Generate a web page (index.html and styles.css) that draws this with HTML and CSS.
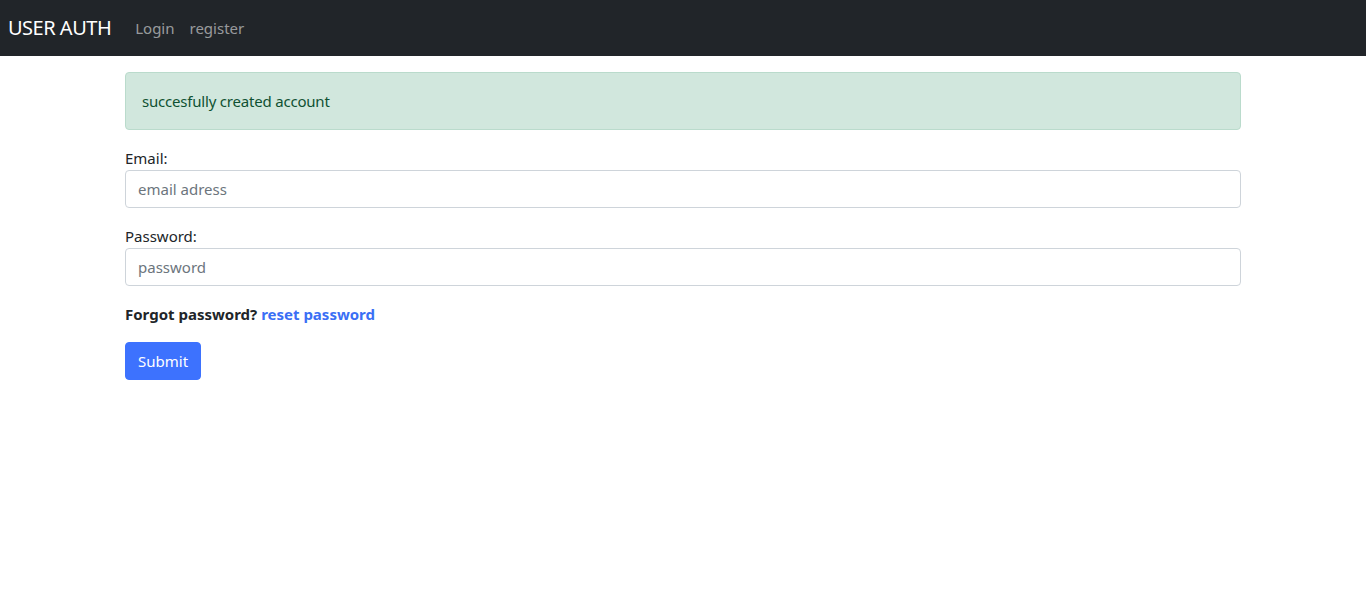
FILE: index.html
```html
<!DOCTYPE html>
<html lang="en">
<head>
<meta charset="utf-8">
<title>User Auth</title>
<link rel="stylesheet" href="styles.css">
</head>
<body>
<nav class="navbar">
  <a class="brand" href="#">USER AUTH</a>
  <ul class="nav-links">
    <li><a href="#">Login</a></li>
    <li><a href="#">register</a></li>
  </ul>
</nav>
<main class="container">
  <div class="alert">succesfully created account</div>
  <form class="form">
    <div class="field">
      <label for="email">Email:</label>
      <input id="email" type="email" placeholder="email adress">
    </div>
    <div class="field">
      <label for="password">Password:</label>
      <input id="password" type="password" placeholder="password">
    </div>
    <p class="forgot">Forgot password? <a href="#">reset password</a></p>
    <button type="submit" class="btn">Submit</button>
  </form>
</main>
</body>
</html>
```

FILE: styles.css
```css
* { box-sizing: border-box; }
html, body { margin: 0; }
body {
  font-family: "Noto Sans", "Open Sans", sans-serif;
  font-size: 16px;
  line-height: 24px;
  color: #212529;
  background: #fff;
}
.navbar {
  height: 56px;
  background: #212529;
  display: flex;
  align-items: center;
  padding: 0 8px;
}
.brand {
  color: #fff;
  text-decoration: none;
  font-size: 20px;
  margin-right: 16px;
  letter-spacing: -0.5px;
}
.nav-links {
  list-style: none;
  display: flex;
  margin: 0;
  padding: 0;
}
.nav-links a {
  display: block;
  padding: 8px 7px 8px 8px;
  color: rgba(255,255,255,0.55);
  text-decoration: none;
  font-size: 15px;
}
.container {
  max-width: 1140px;
  margin: 0 auto;
  padding: 16px 12px 0;
}
.alert {
  background: #d1e7dd;
  border: 1px solid #badbcc;
  color: #0f5132;
  border-radius: 4px;
  padding: 16px;
  margin-bottom: 16px;
  font-size: 15px;
  letter-spacing: -0.2px;
}
.field { margin-bottom: 16px; }
.field label { display: block; font-size: 15px; }
.field input {
  display: block;
  width: 100%;
  height: 38px;
  padding: 6px 12px;
  border: 1px solid #ced4da;
  border-radius: 4px;
  font: inherit;
  font-size: 15px;
  color: #212529;
}
.field input::placeholder { color: #6c757d; }
.forgot {
  margin: 0 0 16px;
  font-weight: 700;
  font-size: 15px;
}
.forgot a { color: #3a6ff5; text-decoration: none; }
.btn {
  height: 38px;
  padding: 6px 12px;
  background: #3d72fe;
  color: #fff;
  border: 1px solid #3d72fe;
  border-radius: 4px;
  font: inherit;
  font-size: 15px;
}
```
